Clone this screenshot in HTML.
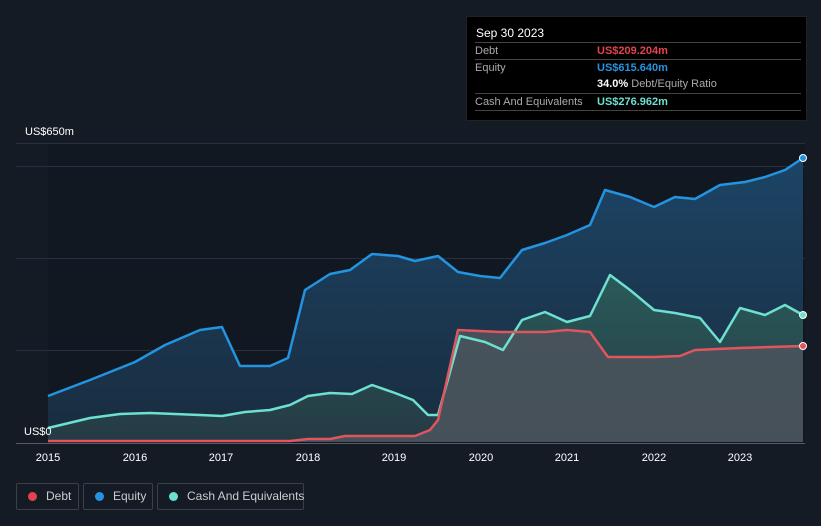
<!DOCTYPE html>
<html><head><style>
html,body{margin:0;width:821px;height:526px;overflow:hidden}
body{background:#151b25;font-family:"Liberation Sans",sans-serif;position:relative}
.tt{position:absolute;left:466px;top:16px;width:339px;height:103px;background:#000;border:1px solid #222}
.tt .h{position:absolute;left:9px;top:9px;color:#fff;font-size:12px}
.row{position:absolute;left:8px;width:326px;font-size:11px;color:#aaa;border-top:1px solid #444;height:16px;line-height:16px;white-space:nowrap}
.row span{position:absolute;left:122px;font-weight:bold}
.lg{position:absolute;top:483px;height:27px;box-sizing:border-box;border:1px solid #3a3f48;border-radius:2px;color:#ccc;font-size:12px;line-height:25px;white-space:nowrap}
.lg i{display:inline-block;width:9px;height:9px;border-radius:50%;margin:0 9px 0 11px;vertical-align:-1px}
</style></head><body>
<svg width="821" height="526" style="position:absolute;left:0;top:0">
<defs>
<linearGradient id="eg" x1="0" y1="0" x2="0" y2="1"><stop offset="0" stop-color="#1c4466"/><stop offset="1" stop-color="#1a2c3e"/></linearGradient>
<linearGradient id="cg" x1="0" y1="0" x2="0" y2="1"><stop offset="0" stop-color="#2a5a5a"/><stop offset="1" stop-color="#253a44"/></linearGradient>
</defs>
<rect x="48" y="143" width="757" height="300" fill="#121822"/>
<g stroke="#283040" stroke-width="1"><line x1="16" y1="143.5" x2="805" y2="143.5"/><line x1="16" y1="166.5" x2="805" y2="166.5"/><line x1="16" y1="258.5" x2="805" y2="258.5"/><line x1="16" y1="350.5" x2="805" y2="350.5"/></g>
<path d="M48,396 L90,380 L135,362 L165,345 L200,330 L222,327 L240,366 L270,366 L288,358 L305,290 L330,274 L350,270 L372,254 L398,256 L415,261 L438,256 L458,272 L480,276 L500,278 L522,250 L545,243 L567,235 L590,225 L605,190 L630,197 L654,207 L675,197 L695,199 L720,185 L745,182 L765,177 L785,170 L803,158 L803,442 L48,442Z" fill="url(#eg)"/>
<path d="M48,428 L90,418 L120,414 L150,413 L200,415 L222,416 L245,412 L270,410 L290,405 L308,396 L330,393 L352,394 L372,385 L395,393 L413,400 L428,415 L438,415 L460,336 L485,342 L503,350 L522,320 L545,312 L567,322 L590,316 L610,275 L630,290 L654,310 L675,313 L700,318 L720,342 L740,308 L765,315 L785,305 L803,315 L803,442 L48,442Z" fill="url(#cg)"/>
<path d="M48,441 L290,441 L308,439 L330,439 L345,436 L415,436 L430,430 L438,420 L458,330 L500,332 L545,332 L567,330 L590,332 L608,357 L654,357 L680,356 L695,350 L740,348 L803,346 L803,442 L48,442Z" fill="#4a535c" opacity="0.9"/>
<polyline fill="none" stroke="#2394df" stroke-width="2.5" stroke-linejoin="round" points="48,396 90,380 135,362 165,345 200,330 222,327 240,366 270,366 288,358 305,290 330,274 350,270 372,254 398,256 415,261 438,256 458,272 480,276 500,278 522,250 545,243 567,235 590,225 605,190 630,197 654,207 675,197 695,199 720,185 745,182 765,177 785,170 803,158"/>
<polyline fill="none" stroke="#6de0d0" stroke-width="2.5" stroke-linejoin="round" points="48,428 90,418 120,414 150,413 200,415 222,416 245,412 270,410 290,405 308,396 330,393 352,394 372,385 395,393 413,400 428,415 438,415 460,336 485,342 503,350 522,320 545,312 567,322 590,316 610,275 630,290 654,310 675,313 700,318 720,342 740,308 765,315 785,305 803,315"/>
<polyline fill="none" stroke="#e0555e" stroke-width="2.5" stroke-linejoin="round" points="48,441 290,441 308,439 330,439 345,436 415,436 430,430 438,420 458,330 500,332 545,332 567,330 590,332 608,357 654,357 680,356 695,350 740,348 803,346"/>
<circle cx="803" cy="158" r="3.5" fill="#2394df" stroke="#fff" stroke-width="1"/>
<circle cx="803" cy="315" r="3.5" fill="#6de0d0" stroke="#fff" stroke-width="1"/>
<circle cx="803" cy="346" r="3.5" fill="#e0555e" stroke="#fff" stroke-width="1"/>
<line x1="16" y1="443.5" x2="805" y2="443.5" stroke="#555c66"/>
<g font-size="11" fill="#fff" text-anchor="middle">
<text x="25" y="135" text-anchor="start">US$650m</text>
<text x="24" y="435" text-anchor="start">US$0</text>
<text x="48" y="461">2015</text><text x="135" y="461">2016</text><text x="221" y="461">2017</text><text x="308" y="461">2018</text><text x="394" y="461">2019</text><text x="481" y="461">2020</text><text x="567" y="461">2021</text><text x="654" y="461">2022</text><text x="740" y="461">2023</text>
</g>
</svg>
<div class="tt">
<div class="h">Sep 30 2023</div>
<div class="row" style="top:25px">Debt<span style="color:#e5434b">US$209.204m</span></div>
<div class="row" style="top:42px">Equity<span style="color:#2394df">US$615.640m</span></div>
<div class="row" style="top:59px;border-top:none"><span style="color:#fff">34.0% <b style="color:#aaa;font-weight:normal">Debt/Equity Ratio</b></span></div>
<div class="row" style="top:76px">Cash And Equivalents<span style="color:#6de0d0">US$276.962m</span></div>
<div class="row" style="top:93px;height:0"></div>
</div>
<div class="lg" style="left:16px;width:63px"><i style="background:#e5434b"></i>Debt</div>
<div class="lg" style="left:83px;width:70px"><i style="background:#2394df"></i>Equity</div>
<div class="lg" style="left:157px;width:147px"><i style="background:#6de0d0"></i>Cash And Equivalents</div>
</body></html>
